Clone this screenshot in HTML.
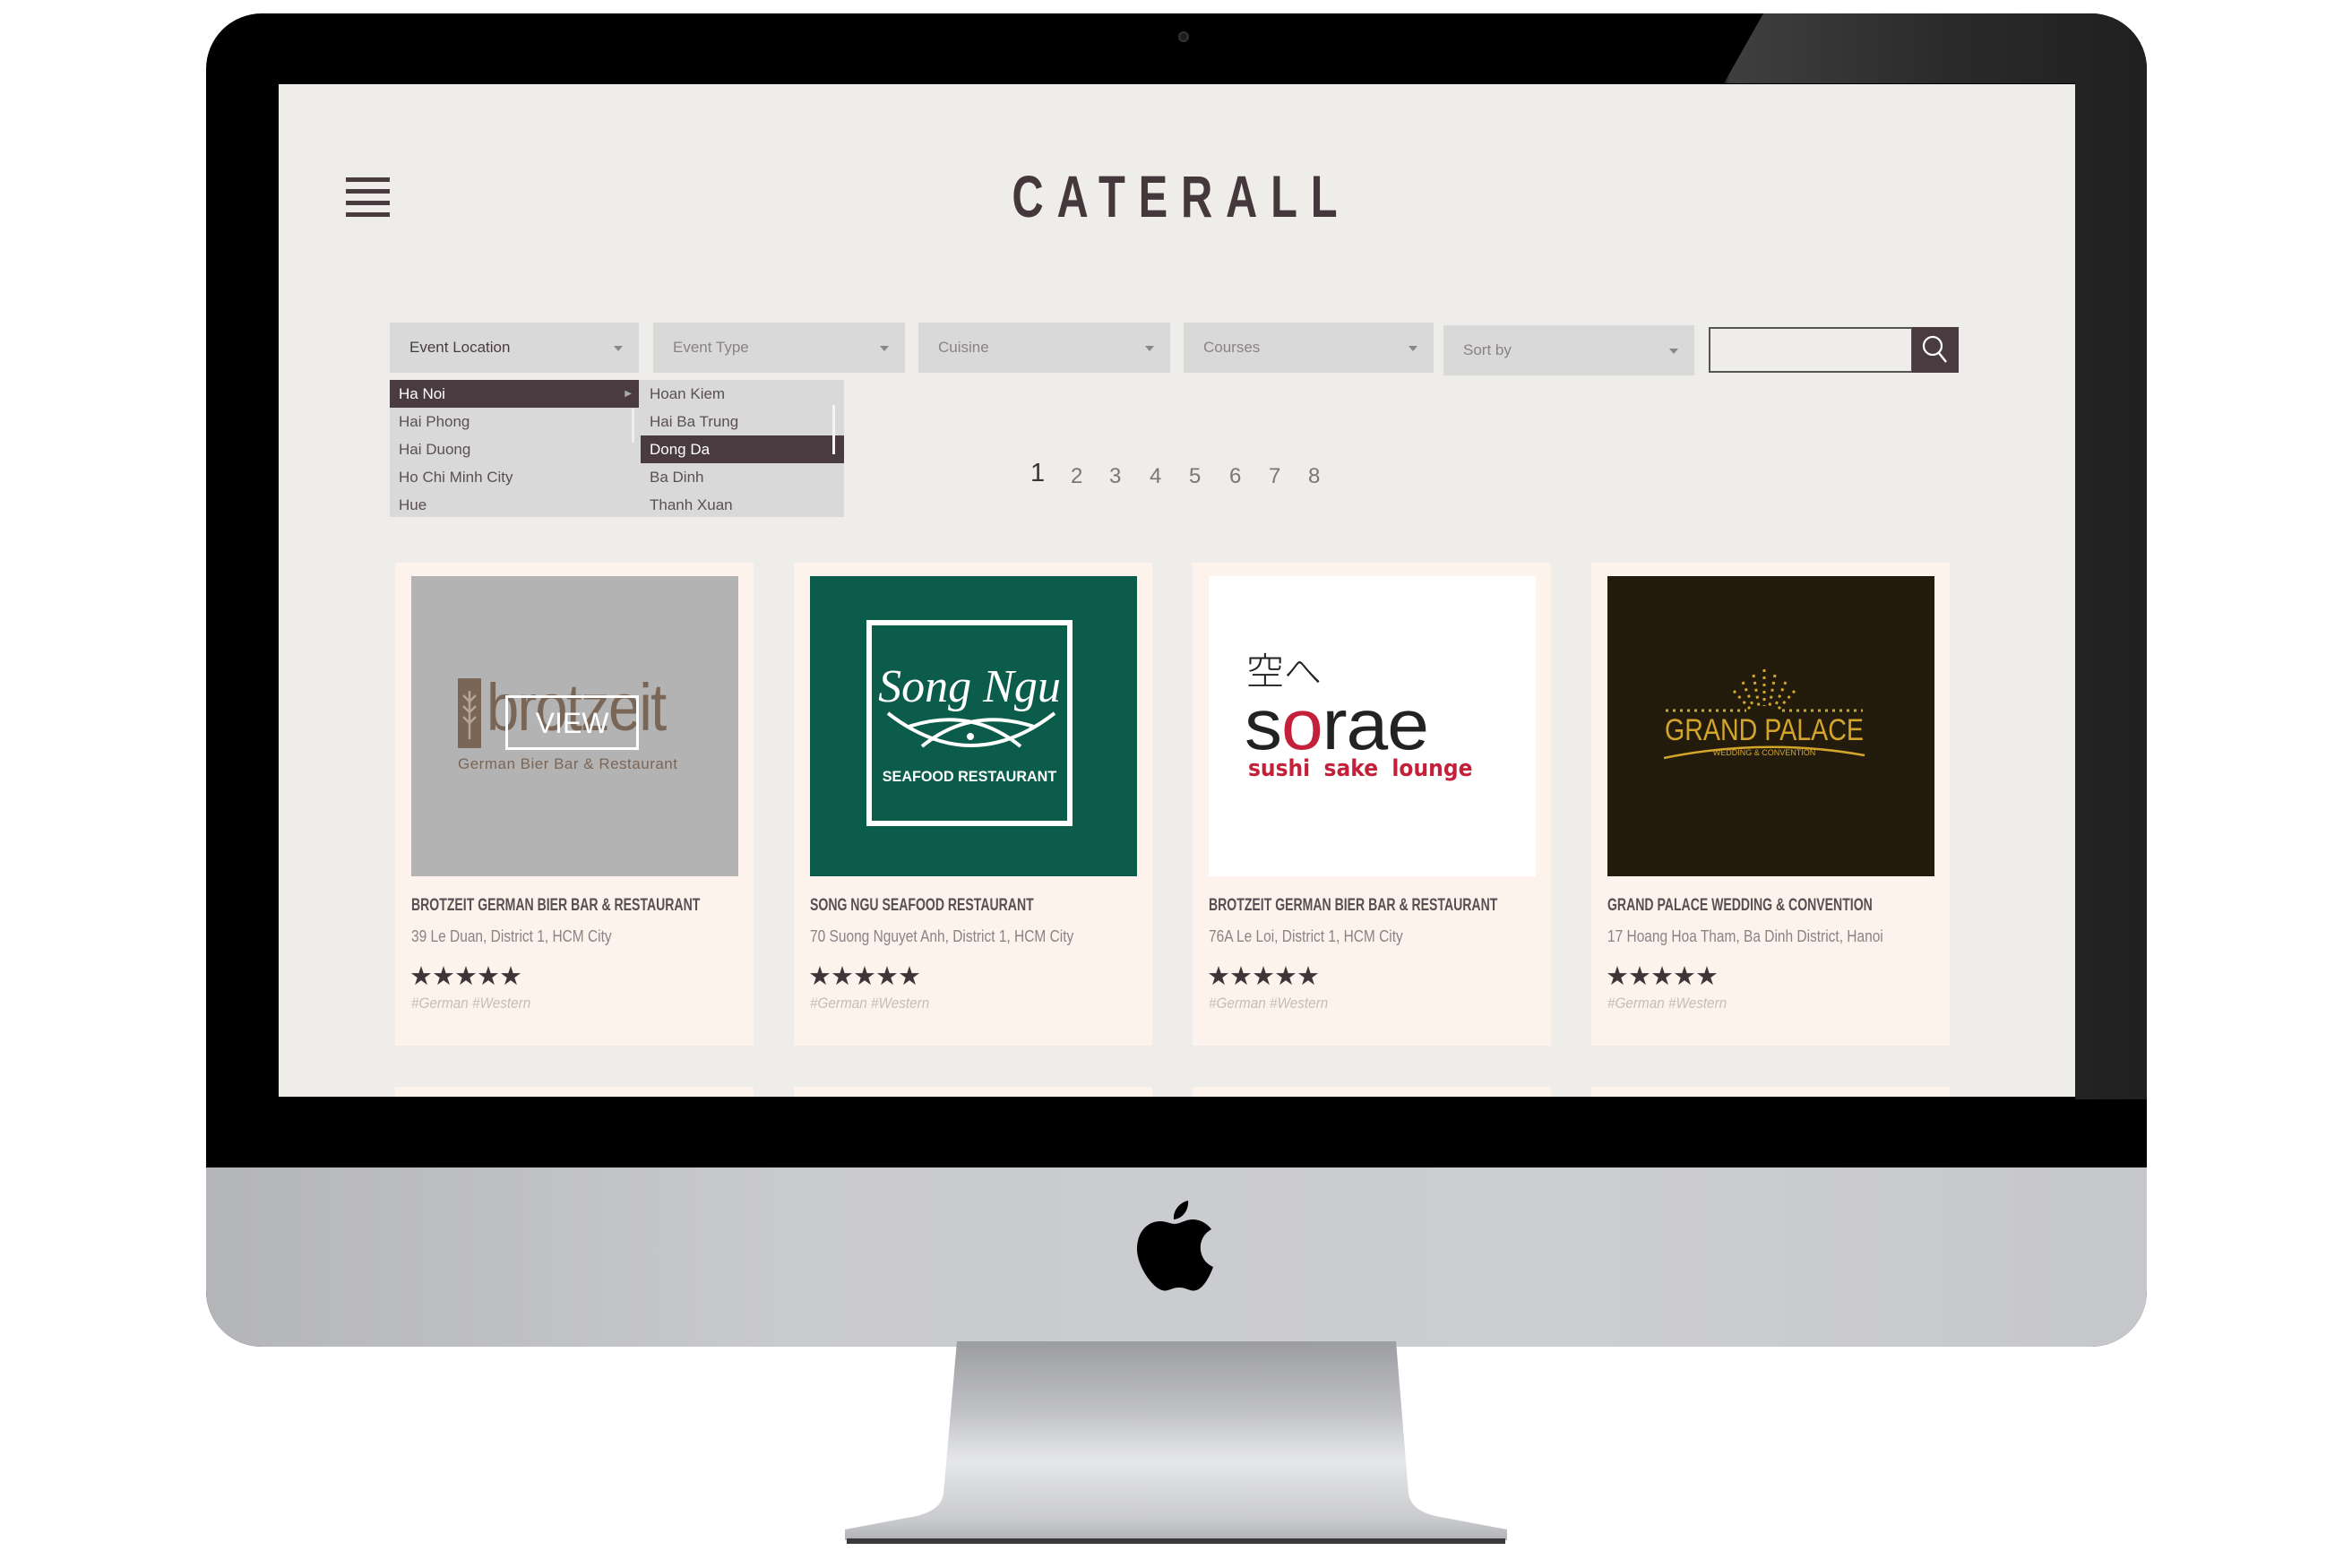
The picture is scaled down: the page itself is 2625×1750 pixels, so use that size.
<!DOCTYPE html>
<html><head><meta charset="utf-8">
<style>
*{margin:0;padding:0;box-sizing:border-box}
body{width:2625px;height:1750px;background:#fff;position:relative;overflow:hidden;font-family:"Liberation Sans",sans-serif}
.a{position:absolute}
.frame{left:230px;top:15px;width:2166px;height:1488px;border-radius:62px;background:#000;overflow:hidden}
.glare{left:0;top:0;width:2166px;height:1212px;background:linear-gradient(90deg,#000 1690px,#3f3f3f 1700px,#2a2a2a 1950px,#202020 2166px);clip-path:polygon(1738px 0,2166px 0,2166px 1212px,2086px 1212px,2086px 78px,1694px 78px)}
.chin{left:0;top:1288px;width:2166px;height:200px;background:linear-gradient(90deg,#b4b5b8,#c9cacd 30%,#cdced1 70%,#c6c7ca)}
.screen{left:311px;top:94px;width:2005px;height:1130px;background:#eeede9;overflow:hidden}
.dd{height:56px;background:#d9d9d9;color:#8a8285;font-size:17px;line-height:56px;padding-left:22px}
.dd:after{content:"";position:absolute;right:18px;top:26px;border-left:5px solid transparent;border-right:5px solid transparent;border-top:6px solid #888}
.li{height:31px;line-height:31px;font-size:17px;color:#5a4f53;padding-left:10px}
.sel{background:#4a3b40;color:#fff}
.pg{top:424px;font-size:24px;color:#7a7577}
.card{top:628px;width:400px;height:539px;background:#fdf3ec}
.img{left:18px;top:15px;width:365px;height:335px;overflow:hidden}
.t{left:18px;top:372px;font-size:19px;font-weight:bold;color:#575053;white-space:nowrap;transform:scaleX(.74);transform-origin:left}
.ad{left:18px;top:407px;font-size:18px;color:#8a8486;white-space:nowrap;transform:scaleX(.86);transform-origin:left}
.st{left:16px;top:444px;font-size:29px;color:#3f3539;letter-spacing:-1px}
.tg{left:18px;top:482px;font-size:17px;color:#c4bdba;font-style:italic;white-space:nowrap;transform:scaleX(.9);transform-origin:left}
</style></head><body>
<div class="a frame">
 <div class="a glare"></div>
 <div class="a chin"></div>
 <div class="a" style="left:1085px;top:20px;width:12px;height:12px;border-radius:50%;background:#1c1c22;border:2px solid #333"></div>
</div>
<svg class="a" style="left:1268px;top:1340px" width="86" height="104" viewBox="0 0 86 104">
<path fill="#000" d="M58 0c1 9-5 20-16 21-1-9 6-19 16-21zM43 26c6 0 12-5 20-5 8 0 16 4 21 11-18 10-15 35 2 42-4 11-11 24-19 26-7 2-10-3-19-3s-12 5-19 3C18 97 0 72 1 52 2 33 14 23 27 23c7 0 11 3 16 3z"/>
</svg>
<svg class="a" style="left:940px;top:1497px" width="745" height="232" viewBox="0 0 745 232">
<defs><linearGradient id="g" x1="0" y1="0" x2="0" y2="1"><stop offset="0" stop-color="#9c9da1"/><stop offset=".35" stop-color="#c0c1c4"/><stop offset=".6" stop-color="#e6e7e9"/><stop offset=".9" stop-color="#c9cacd"/><stop offset="1" stop-color="#b2b3b6"/></linearGradient></defs>
<path fill="url(#g)" d="M128 0h490l14 170c2 12 10 20 30 25l80 15v12H3v-12l80-15c20-5 28-13 30-25z"/>
<rect x="5" y="220" width="735" height="6" fill="#3a3a3a"/>
</svg>

<div class="a screen">
 <div class="a" style="left:75px;top:104px;width:49px;height:5px;background:#4a3b40"></div>
 <div class="a" style="left:75px;top:117px;width:49px;height:5px;background:#4a3b40"></div>
 <div class="a" style="left:75px;top:130px;width:49px;height:5px;background:#4a3b40"></div>
 <div class="a" style="left:75px;top:143px;width:49px;height:5px;background:#4a3b40"></div>
 <div class="a" style="left:700px;top:85px;width:600px;text-align:center;font-size:66px;font-weight:bold;color:#45383d;letter-spacing:20px;transform:scaleX(.74);line-height:80px;text-indent:20px">CATERALL</div>

 <div class="a dd" style="left:124px;top:266px;width:278px;color:#4a3b40">Event Location</div>
 <div class="a dd" style="left:418px;top:266px;width:281px">Event Type</div>
 <div class="a dd" style="left:714px;top:266px;width:281px">Cuisine</div>
 <div class="a dd" style="left:1010px;top:266px;width:279px">Courses</div>
 <div class="a dd" style="left:1300px;top:269px;width:280px">Sort by</div>
 <div class="a" style="left:1596px;top:271px;width:228px;height:51px;border:2px solid #555;background:#eeede9"></div>
 <div class="a" style="left:1823px;top:271px;width:52px;height:51px;background:#4a3b40">
  <svg width="52" height="51"><circle cx="23" cy="21" r="10" fill="none" stroke="#fff" stroke-width="2.2"/><line x1="30" y1="29" x2="38" y2="39" stroke="#fff" stroke-width="2.4"/></svg>
 </div>

 <div class="a" style="left:124px;top:330px;width:507px;height:153px;background:#d9d9d9"></div>
 <div class="a" style="left:124px;top:330px;width:278px">
  <div class="li sel">Ha Noi<span style="float:right;margin-right:8px;font-size:10px;color:#aaa">▶</span></div>
  <div class="li">Hai Phong</div><div class="li">Hai Duong</div><div class="li">Ho Chi Minh City</div><div class="li">Hue</div>
 </div>
 <div class="a" style="left:404px;top:330px;width:227px">
  <div class="li">Hoan Kiem</div><div class="li">Hai Ba Trung</div><div class="li sel">Dong Da</div><div class="li">Ba Dinh</div><div class="li">Thanh Xuan</div>
 </div>
 <div class="a" style="left:618px;top:358px;width:3px;height:55px;background:#f5f5f5"></div>
 <div class="a" style="left:394px;top:362px;width:3px;height:38px;background:#eee"></div>

 <div class="a pg" style="left:839px;top:418px;font-size:29px;color:#3b3336">1</div>
 <div class="a pg" style="left:884px">2</div><div class="a pg" style="left:927px">3</div><div class="a pg" style="left:972px">4</div><div class="a pg" style="left:1016px">5</div><div class="a pg" style="left:1061px">6</div><div class="a pg" style="left:1105px">7</div><div class="a pg" style="left:1149px">8</div>
</div>

<div class="a card" style="left:441px">
 <div class="a img" style="background:#b3b3b3">
  <div class="a" style="left:52px;top:114px;width:26px;height:78px;background:#7a6656"></div>
  <svg class="a" style="left:55px;top:120px" width="20" height="66"><path d="M10 62V8M10 20l-7-7M10 20l7-7M10 32l-7-7M10 32l7-7M10 44l-7-7M10 44l7-7" stroke="#b3a699" stroke-width="2.5" fill="none"/></svg>
  <div class="a" style="left:84px;top:104px;font-size:74px;color:#7a6656;letter-spacing:-2px;transform:scaleX(.88);transform-origin:left;line-height:86px">brotzeit</div>
  <div class="a" style="left:52px;top:200px;font-size:17px;color:#7a6656;white-space:nowrap;letter-spacing:.5px">German Bier Bar &amp; Restaurant</div>
  <div class="a" style="left:105px;top:133px;width:149px;height:61px;border:3px solid #fff"></div>
  <div class="a" style="left:105px;top:146px;width:149px;text-align:center;font-size:32px;color:#fff">VIEW</div>
 </div>
 <div class="a t">BROTZEIT GERMAN BIER BAR &amp; RESTAURANT</div>
 <div class="a ad">39 Le Duan, District 1, HCM City</div>
 <div class="a st">★★★★★</div>
 <div class="a tg">#German #Western</div>
</div>

<div class="a card" style="left:886px">
 <div class="a img" style="left:18px;background:#0b5c4b">
  <div class="a" style="left:63px;top:49px;width:230px;height:230px;border:6px solid #fff"></div>
  <div class="a" style="left:63px;top:92px;width:230px;text-align:center;font-family:'Liberation Serif',serif;font-style:italic;font-size:52px;color:#fff;line-height:64px">Song Ngu</div>
  <svg class="a" style="left:85px;top:150px" width="190" height="50"><path d="M2 3Q95 75 188 3M25 18Q95 -5 150 40M165 18Q95 -5 40 40" stroke="#fff" stroke-width="4" fill="none"/><circle cx="94" cy="29" r="4" fill="#fff"/></svg>
  <div class="a" style="left:63px;top:214px;width:230px;text-align:center;font-size:17px;font-weight:bold;color:#fff;transform:scaleX(.95)">SEAFOOD RESTAURANT</div>
 </div>
 <div class="a t">SONG NGU SEAFOOD RESTAURANT</div>
 <div class="a ad">70 Suong Nguyet Anh, District 1, HCM City</div>
 <div class="a st">★★★★★</div>
 <div class="a tg">#German #Western</div>
</div>

<div class="a card" style="left:1331px">
 <div class="a img" style="background:#fff">
  <div class="a" style="left:42px;top:80px;font-family:'Noto Sans CJK JP',sans-serif;font-size:42px;color:#222;line-height:48px;font-weight:300">空へ</div>
  <div class="a" style="left:40px;top:120px;font-size:80px;color:#222;line-height:92px;letter-spacing:-1px;transform:scaleX(1.05);transform-origin:left">s<span style="color:#c4203a">o</span>rae</div>
  <div class="a" style="left:44px;top:200px;font-size:26px;font-weight:bold;color:#c4203a;word-spacing:8px;white-space:nowrap;font-family:'DejaVu Sans',sans-serif;transform:scaleX(.9);transform-origin:left">sushi sake lounge</div>
 </div>
 <div class="a t">BROTZEIT GERMAN BIER BAR &amp; RESTAURANT</div>
 <div class="a ad">76A Le Loi, District 1, HCM City</div>
 <div class="a st">★★★★★</div>
 <div class="a tg">#German #Western</div>
</div>

<div class="a card" style="left:1776px">
 <div class="a img" style="background:#231c0d">
  <svg class="a" style="left:55px;top:100px" width="240" height="110">
   <g stroke="#d4a52b" stroke-width="3" stroke-dasharray="3 5" fill="none">
    <path d="M120 4V45M108 10l6 35M132 10l-6 35M96 18l12 28M144 18l-12 28M86 28l18 20M154 28l-18 20"/>
    <path d="M10 50H100M140 50H230"/>
   </g>
   <text x="120" y="83" text-anchor="middle" font-family="Liberation Sans" font-size="34" fill="#d4a52b" textLength="222" lengthAdjust="spacingAndGlyphs">GRAND PALACE</text>
   <path d="M8 103Q120 80 232 100" stroke="#d4a52b" stroke-width="2.5" fill="none"/>
   <text x="120" y="100" text-anchor="middle" font-family="Liberation Sans" font-size="9" fill="#d4a52b">WEDDING &amp; CONVENTION</text>
  </svg>
 </div>
 <div class="a t">GRAND PALACE WEDDING &amp; CONVENTION</div>
 <div class="a ad">17 Hoang Hoa Tham, Ba Dinh District, Hanoi</div>
 <div class="a st">★★★★★</div>
 <div class="a tg">#German #Western</div>
</div>

<div class="a" style="left:441px;top:1213px;width:400px;height:11px;background:#fdf3ec"></div>
<div class="a" style="left:886px;top:1213px;width:400px;height:11px;background:#fdf3ec"></div>
<div class="a" style="left:1331px;top:1213px;width:400px;height:11px;background:#fdf3ec"></div>
<div class="a" style="left:1776px;top:1213px;width:400px;height:11px;background:#fdf3ec"></div>
</body></html>
